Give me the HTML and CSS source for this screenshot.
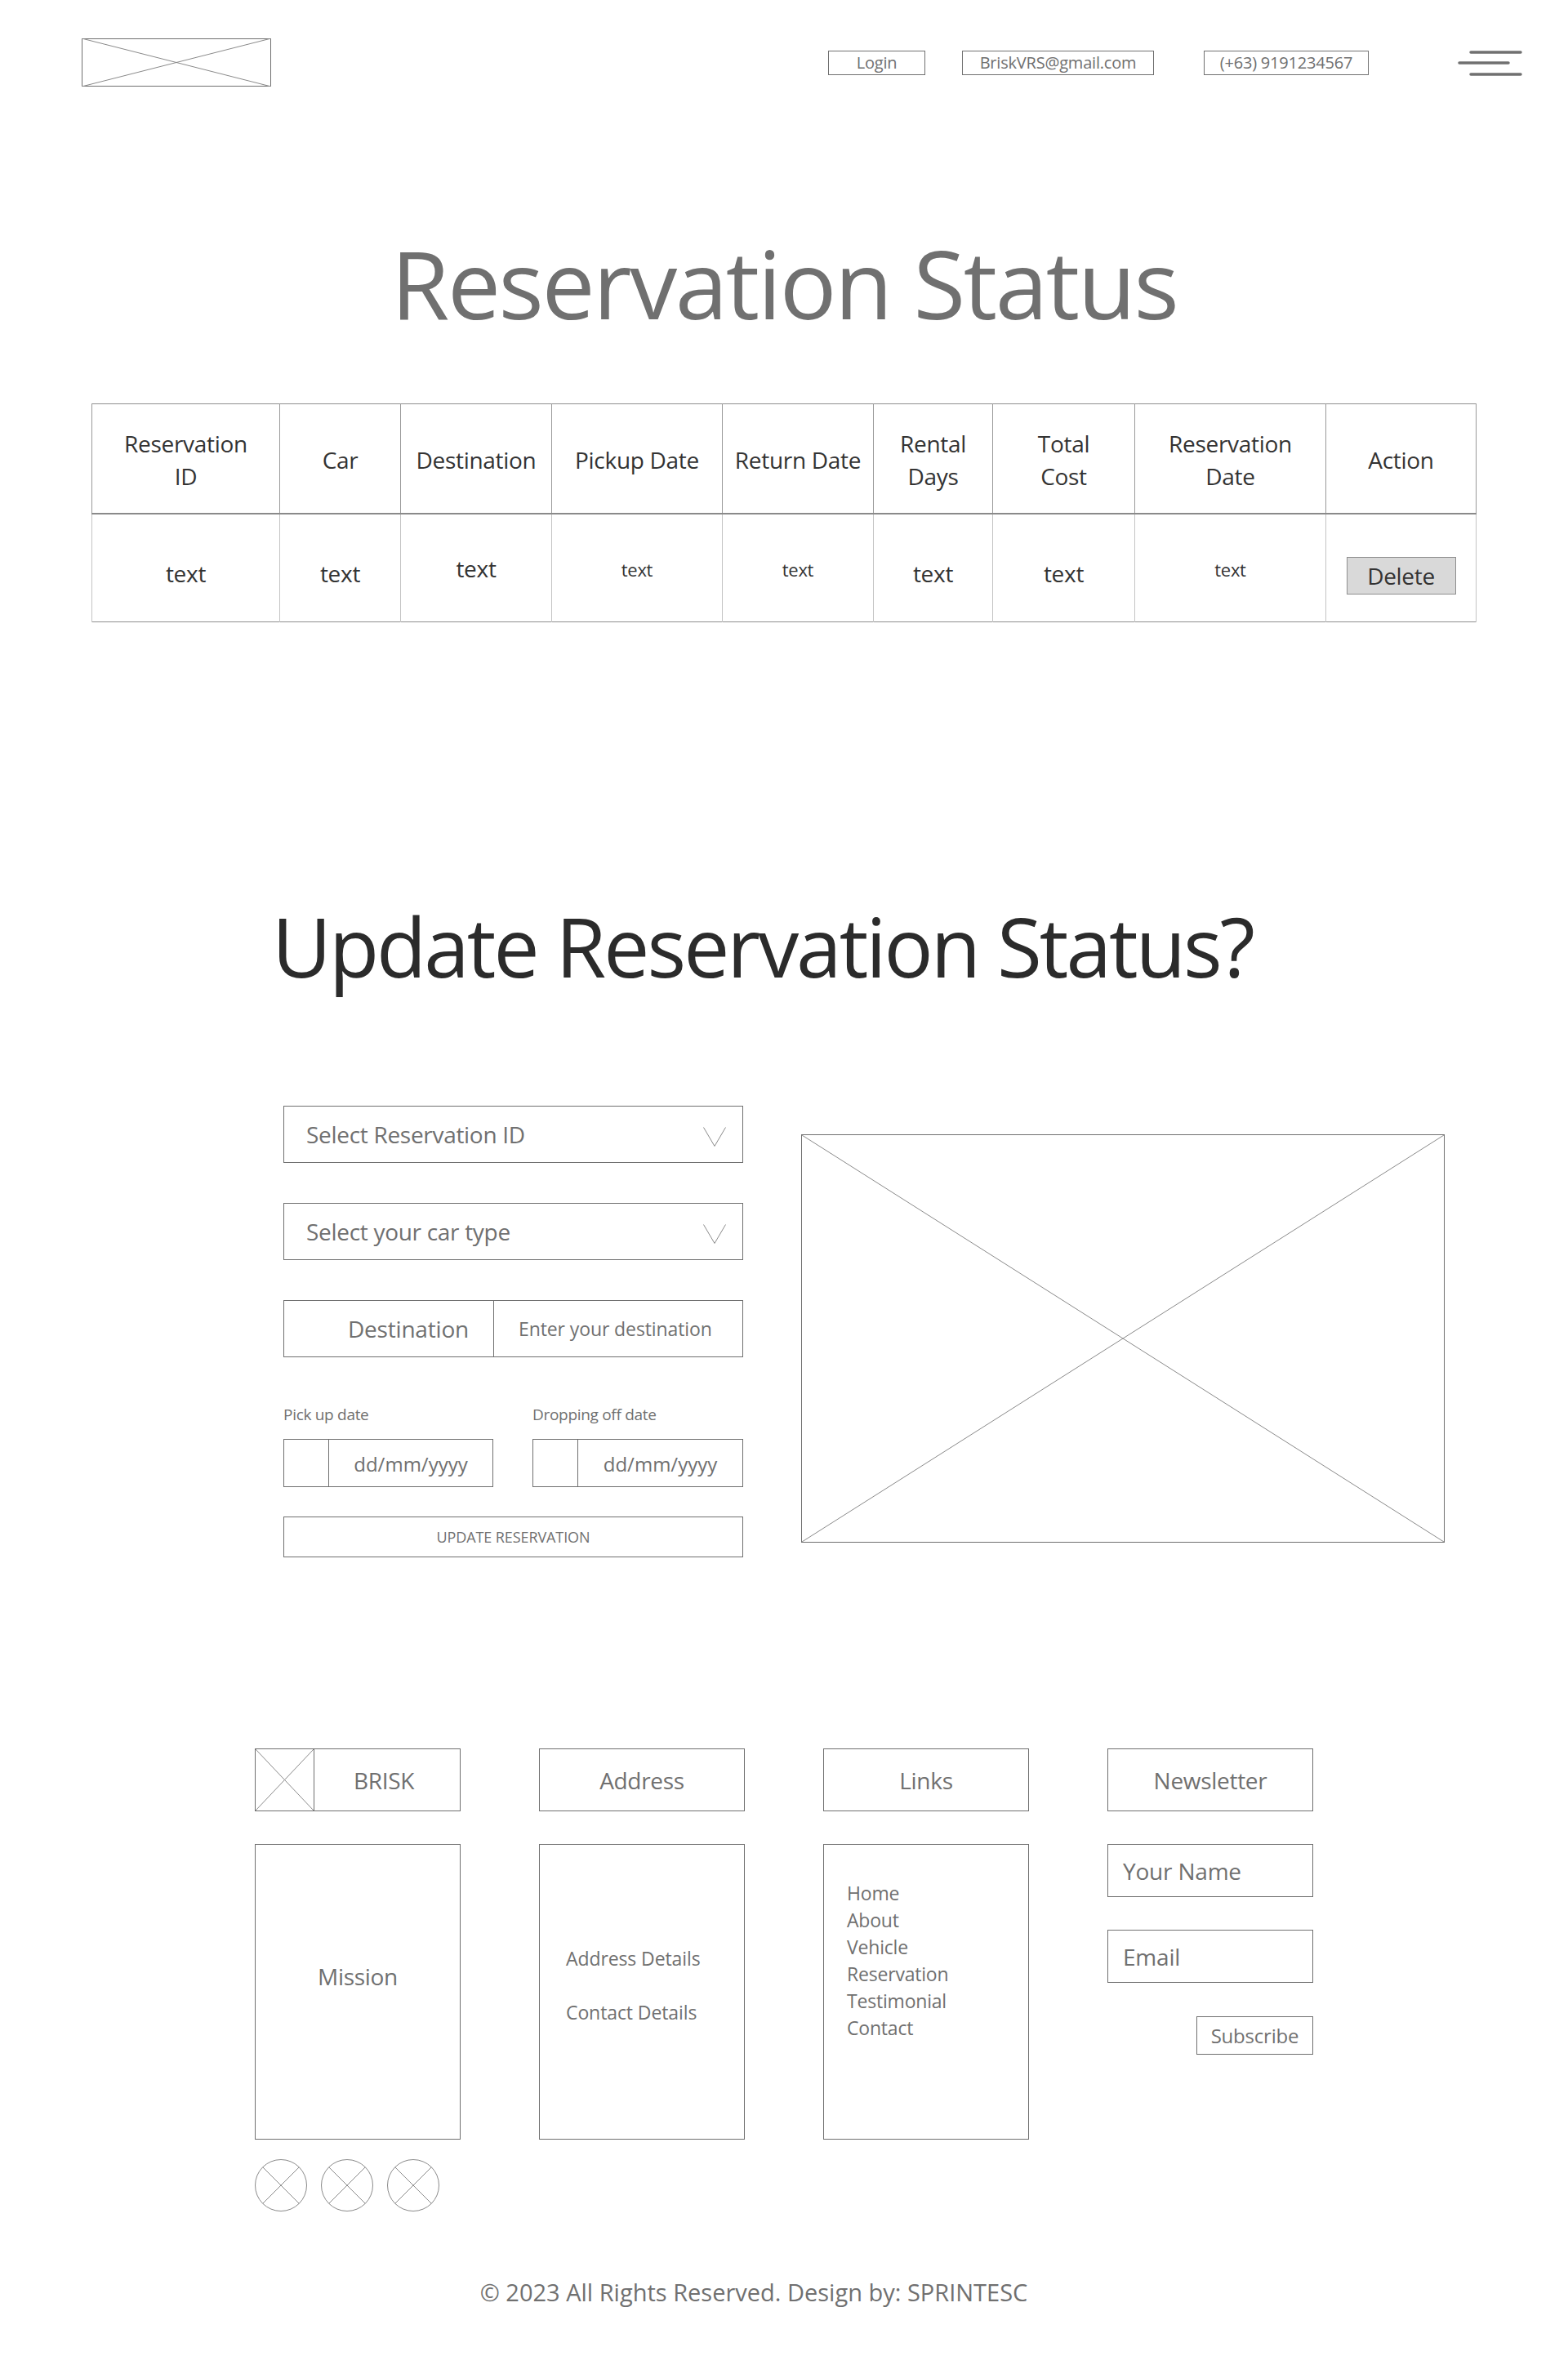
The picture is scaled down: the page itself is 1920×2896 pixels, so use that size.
FILE: index.html
```html
<!DOCTYPE html>
<html lang="en">
<head>
<meta charset="utf-8">
<title>Reservation Status</title>
<link rel="stylesheet" href="styles.css">
</head>
<body>
<header class="topbar">
  <svg class="logo" width="232" height="59" viewBox="0 0 232 59">
    <rect x="0.5" y="0.5" width="231" height="58" fill="none" stroke="#707070"/>
    <line x1="0" y1="0" x2="232" y2="59" stroke="#8a8a8a"/>
    <line x1="0" y1="59" x2="232" y2="0" stroke="#8a8a8a"/>
  </svg>
  <nav class="topnav">
    <a class="navbox nav-login">Login</a>
    <a class="navbox nav-email">BriskVRS@gmail.com</a>
    <a class="navbox nav-phone">(+63) 9191234567</a>
    <span class="burger">
      <svg width="79" height="32" viewBox="0 0 79 32">
        <line x1="16" y1="3" x2="77" y2="3" stroke="#707070" stroke-width="3.5" stroke-linecap="round"/>
        <line x1="2" y1="16" x2="62" y2="16" stroke="#707070" stroke-width="3.5" stroke-linecap="round"/>
        <line x1="16" y1="30" x2="77" y2="30" stroke="#707070" stroke-width="3.5" stroke-linecap="round"/>
      </svg>
    </span>
  </nav>
</header>

<main>
  <h1 class="page-title">Reservation Status</h1>

  <table class="status-table">
    <colgroup>
      <col class="w230"><col class="w148"><col class="w185"><col class="w209"><col class="w185"><col class="w146"><col class="w174"><col class="w234"><col class="w184">
    </colgroup>
    <thead>
      <tr>
        <th>Reservation<br>ID</th>
        <th>Car</th>
        <th>Destination</th>
        <th>Pickup Date</th>
        <th>Return Date</th>
        <th>Rental<br>Days</th>
        <th>Total<br>Cost</th>
        <th>Reservation<br>Date</th>
        <th>Action</th>
      </tr>
    </thead>
    <tbody>
      <tr>
        <td>text</td>
        <td>text</td>
        <td class="raised">text</td>
        <td class="small">text</td>
        <td class="small raised">text</td>
        <td>text</td>
        <td>text</td>
        <td class="small">text</td>
        <td><button class="delete-btn" type="button">Delete</button></td>
      </tr>
    </tbody>
  </table>

  <h2 class="update-title">Update Reservation Status?</h2>

  <section class="update">
    <form class="update-form">
      <div class="field select">
        <span>Select Reservation ID</span>
        <svg class="chev" width="28" height="24" viewBox="0 0 28 24"><polyline points="0.5,0.5 14,23.5 27.5,0.5" fill="none" stroke="#8a8a8a" stroke-width="1"/></svg>
      </div>
      <div class="field select gap49">
        <span>Select your car type</span>
        <svg class="chev" width="28" height="24" viewBox="0 0 28 24"><polyline points="0.5,0.5 14,23.5 27.5,0.5" fill="none" stroke="#8a8a8a" stroke-width="1"/></svg>
      </div>
      <div class="field dest gap49">
        <span class="dest-label">Destination</span>
        <span class="dest-input">Enter your destination</span>
      </div>
      <div class="dates">
        <div class="date-col">
          <label class="date-label">Pick up date</label>
          <div class="date-box"><span class="date-cal"></span><span class="date-text">dd/mm/yyyy</span></div>
        </div>
        <div class="date-col">
          <label class="date-label">Dropping off date</label>
          <div class="date-box"><span class="date-cal"></span><span class="date-text">dd/mm/yyyy</span></div>
        </div>
      </div>
      <button class="update-btn" type="button">UPDATE RESERVATION</button>
    </form>
    <div class="image-ph">
      <svg width="100%" height="100%" viewBox="0 0 100 100" preserveAspectRatio="none">
        <line x1="0" y1="0" x2="100" y2="100" stroke="#8a8a8a" stroke-width="1" vector-effect="non-scaling-stroke"/>
        <line x1="0" y1="100" x2="100" y2="0" stroke="#8a8a8a" stroke-width="1" vector-effect="non-scaling-stroke"/>
      </svg>
    </div>
  </section>
</main>

<footer class="footer">
  <div class="footer-cols">
    <div class="fcol">
      <div class="fhead brand">
        <span class="brand-logo">
          <svg width="100%" height="100%" viewBox="0 0 100 100" preserveAspectRatio="none">
            <line x1="0" y1="0" x2="100" y2="100" stroke="#8a8a8a" stroke-width="1" vector-effect="non-scaling-stroke"/>
            <line x1="0" y1="100" x2="100" y2="0" stroke="#8a8a8a" stroke-width="1" vector-effect="non-scaling-stroke"/>
          </svg>
        </span>
        <span class="brand-name">BRISK</span>
      </div>
      <div class="fbox center">Mission</div>
      <div class="socials">
        <svg class="social" width="64" height="64" viewBox="0 0 64 64"><circle cx="32" cy="32" r="31.5" fill="none" stroke="#8a8a8a"/><line x1="9.7" y1="9.7" x2="54.3" y2="54.3" stroke="#8a8a8a"/><line x1="9.7" y1="54.3" x2="54.3" y2="9.7" stroke="#8a8a8a"/></svg>
        <svg class="social" width="64" height="64" viewBox="0 0 64 64"><circle cx="32" cy="32" r="31.5" fill="none" stroke="#8a8a8a"/><line x1="9.7" y1="9.7" x2="54.3" y2="54.3" stroke="#8a8a8a"/><line x1="9.7" y1="54.3" x2="54.3" y2="9.7" stroke="#8a8a8a"/></svg>
        <svg class="social" width="64" height="64" viewBox="0 0 64 64"><circle cx="32" cy="32" r="31.5" fill="none" stroke="#8a8a8a"/><line x1="9.7" y1="9.7" x2="54.3" y2="54.3" stroke="#8a8a8a"/><line x1="9.7" y1="54.3" x2="54.3" y2="9.7" stroke="#8a8a8a"/></svg>
      </div>
    </div>
    <div class="fcol">
      <div class="fhead">Address</div>
      <div class="fbox details">
        <span>Address Details</span>
        <span>Contact Details</span>
      </div>
    </div>
    <div class="fcol">
      <div class="fhead">Links</div>
      <ul class="fbox links">
        <li>Home</li>
        <li>About</li>
        <li>Vehicle</li>
        <li>Reservation</li>
        <li>Testimonial</li>
        <li>Contact</li>
      </ul>
    </div>
    <div class="fcol">
      <div class="fhead">Newsletter</div>
      <div class="finput">Your Name</div>
      <div class="finput">Email</div>
      <button class="subscribe" type="button">Subscribe</button>
    </div>
  </div>
  <p class="copyright">© 2023 All Rights Reserved. Design by: SPRINTESC</p>
</footer>
</body>
</html>
```

FILE: styles.css
```css
* {
  box-sizing: border-box;
  margin: 0;
  padding: 0;
}

html, body {
  background: #ffffff;
}

body {
  width: 1920px;
  min-height: 2896px;
  font-family: "Open Sans", "Noto Sans", "DejaVu Sans", sans-serif;
  color: #707070;
}

/* ---------- top bar ---------- */
.topbar {
  display: flex;
  align-items: center;
  justify-content: space-between;
  padding: 47px 56px 0 100px;
}

.logo {
  display: block;
}

.topnav {
  display: flex;
  align-items: center;
}

.navbox {
  display: flex;
  align-items: center;
  justify-content: center;
  height: 30px;
  border: 1px solid #707070;
  font-size: 20px;
  letter-spacing: -0.2px;
  line-height: 1;
  color: #707070;
  text-decoration: none;
}

.nav-login { width: 119px; }
.nav-email { width: 235px; margin-left: 45px; }
.nav-phone { width: 202px; margin-left: 61px; }

.burger {
  display: block;
  width: 79px;
  height: 32px;
  margin-left: 109px;
}

.burger svg { display: block; }

/* ---------- title ---------- */
.page-title {
  margin-top: 182px;
  font-size: 116px;
  line-height: 116px;
  font-weight: 400;
  letter-spacing: -2.4px;
  text-align: center;
  color: #707070;
}

/* ---------- table ---------- */
.status-table {
  margin: 90px auto 0;
  width: 1695px;
  table-layout: fixed;
  border-collapse: collapse;
  color: #333333;
  border: 1px solid #8f8f8f;
}

.w230 { width: 230px; }
.w148 { width: 148px; }
.w185 { width: 185px; }
.w209 { width: 209px; }
.w146 { width: 146px; }
.w174 { width: 174px; }
.w234 { width: 234px; }
.w184 { width: 184px; }

.status-table th,
.status-table td {
  text-align: center;
  vertical-align: middle;
  font-weight: 400;
  font-size: 28px;
  line-height: 40px;
  letter-spacing: -0.3px;
}

.status-table thead tr { height: 134px; }
.status-table tbody tr { height: 133px; }

.status-table th {
  border-left: 1px solid #9a9a9a;
  border-right: 1px solid #9a9a9a;
  border-bottom: 2px solid #8a8a8a;
  padding-top: 4px;
}

.status-table td {
  border-left: 1px solid #c4c4c4;
  border-right: 1px solid #c4c4c4;
  padding-top: 14px;
}

.status-table td.raised { padding-top: 2px; }
.status-table td.small { font-size: 22px; padding-top: 4px; }

.delete-btn {
  width: 134px;
  height: 46px;
  margin-top: 6px;
  background: #d9d9d9;
  border: 1px solid #8f8f8f;
  font-family: inherit;
  font-size: 28px;
  letter-spacing: -0.3px;
  color: #333333;
}

/* ---------- update section ---------- */
.update-title {
  margin-top: 346px;
  padding-left: 333px;
  font-size: 100px;
  line-height: 100px;
  font-weight: 400;
  letter-spacing: -3px;
  color: #2b2b2b;
}

.update {
  display: flex;
  align-items: flex-start;
  gap: 71px;
  margin-top: 146px;
  padding-left: 347px;
}

.update-form {
  display: flex;
  flex-direction: column;
  width: 563px;
}

.field {
  height: 70px;
  border: 1px solid #707070;
  display: flex;
  align-items: center;
}

.gap49 { margin-top: 49px; }

.select {
  justify-content: space-between;
  padding: 0 20px 0 27px;
  font-size: 28px;
  letter-spacing: -0.3px;
}

.chev { display: block; margin-top: 6px; }

.dest {
  align-items: stretch;
}

.dest-label {
  width: 257px;
  border-right: 1px solid #707070;
  display: flex;
  align-items: center;
  justify-content: flex-end;
  padding-right: 30px;
  font-size: 28px;
  letter-spacing: -0.2px;
}

.dest-input {
  flex: 1;
  display: flex;
  align-items: center;
  padding-left: 30px;
  font-size: 23px;
  letter-spacing: -0.1px;
}

.dates {
  display: grid;
  grid-template-columns: 257px 258px;
  column-gap: 48px;
  margin-top: 57px;
}

.date-col {
  display: flex;
  flex-direction: column;
}

.date-label {
  font-size: 19px;
  line-height: 26px;
  letter-spacing: -0.3px;
  margin-bottom: 17px;
}

.date-box {
  height: 59px;
  border: 1px solid #707070;
  display: flex;
}

.date-cal {
  width: 55px;
  border-right: 1px solid #707070;
}

.date-text {
  flex: 1;
  display: flex;
  align-items: center;
  justify-content: center;
  font-size: 24px;
  padding-top: 2px;
}

.update-btn {
  margin-top: 36px;
  height: 50px;
  width: 100%;
  background: #ffffff;
  border: 1px solid #707070;
  font-family: inherit;
  font-size: 18px;
  letter-spacing: -0.1px;
  color: #707070;
}

.image-ph {
  width: 788px;
  height: 500px;
  margin-top: 35px;
  border: 1px solid #707070;
}

.image-ph svg { display: block; }

/* ---------- footer ---------- */
.footer {
  margin-top: 234px;
}

.footer-cols {
  display: flex;
  justify-content: center;
  gap: 96px;
}

.fcol {
  width: 252px;
  display: flex;
  flex-direction: column;
}

.fhead {
  height: 77px;
  border: 1px solid #707070;
  display: flex;
  align-items: center;
  justify-content: center;
  font-size: 28px;
  letter-spacing: -0.3px;
}

.brand {
  justify-content: flex-start;
  align-items: stretch;
}

.brand-logo {
  width: 72px;
  border-right: 1px solid #707070;
}

.brand-logo svg { display: block; }

.brand-name {
  flex: 1;
  display: flex;
  align-items: center;
  justify-content: center;
  padding-right: 8px;
}

.fbox {
  margin-top: 40px;
  height: 362px;
  border: 1px solid #707070;
}

.fbox.center {
  display: flex;
  align-items: center;
  justify-content: center;
  padding-bottom: 38px;
  font-size: 28px;
  letter-spacing: -0.3px;
}

.details {
  display: flex;
  flex-direction: column;
  justify-content: center;
  gap: 34px;
  padding: 0 0 16px 32px;
  font-size: 23px;
  line-height: 32px;
  letter-spacing: -0.1px;
}

.links {
  list-style: none;
  padding: 43px 0 0 28px;
  font-size: 23px;
  line-height: 33px;
  letter-spacing: -0.2px;
}

.socials {
  display: flex;
  gap: 17px;
  margin-top: 24px;
}

.social { display: block; }

.finput {
  margin-top: 40px;
  height: 65px;
  border: 1px solid #707070;
  display: flex;
  align-items: center;
  padding-left: 18px;
  font-size: 28px;
  letter-spacing: -0.2px;
}

.subscribe {
  align-self: flex-end;
  margin-top: 41px;
  width: 143px;
  height: 47px;
  background: #ffffff;
  border: 1px solid #707070;
  font-family: inherit;
  font-size: 24px;
  letter-spacing: -0.2px;
  color: #707070;
}

.copyright {
  margin-top: 79px;
  padding-right: 74px;
  text-align: center;
  font-size: 29px;
  letter-spacing: 0;
  color: #707070;
}
```
